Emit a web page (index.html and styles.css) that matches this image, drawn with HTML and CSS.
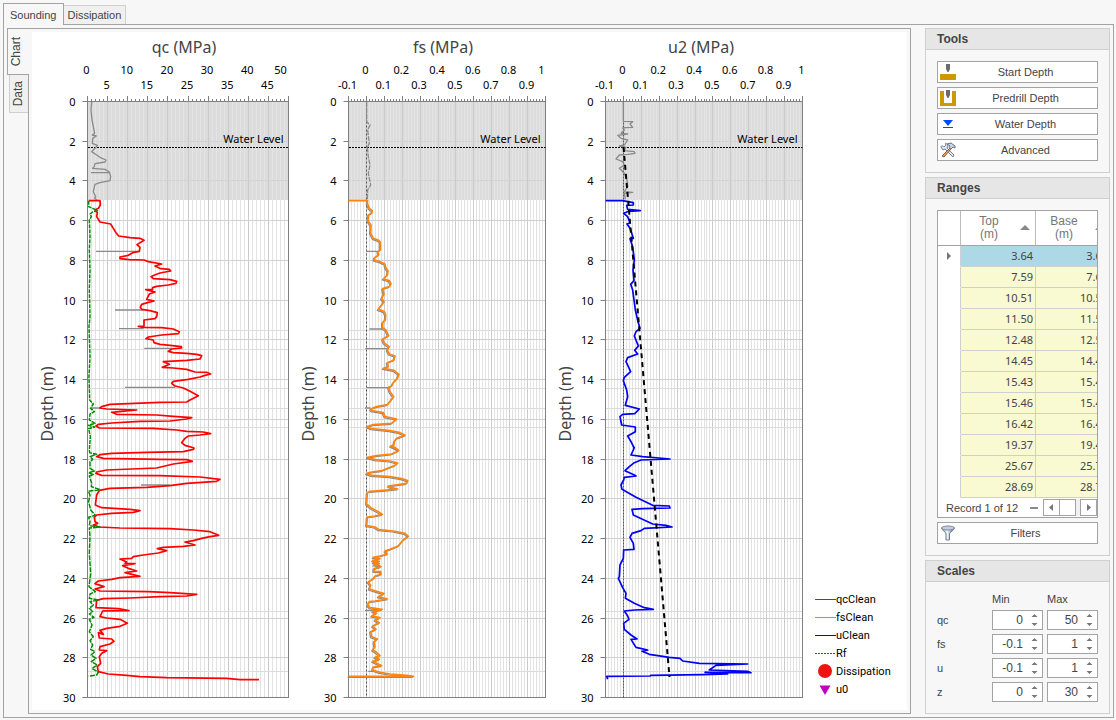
FILE: index.html
```html
<!DOCTYPE html>
<html lang="en">
<head>
<meta charset="utf-8">
<title>Sounding</title>
<link rel="stylesheet" href="styles.css">
</head>
<body>
<div class="tabs" role="tablist">
  <button class="tab tab-on" role="tab" aria-selected="true">Sounding</button>
  <button class="tab" role="tab" aria-selected="false">Dissipation</button>
</div>
<main class="page">
  <section class="view">
    <div class="side-tabs" role="tablist" aria-orientation="vertical">
      <button class="side-tab side-tab-on" role="tab" aria-selected="true"><span>Chart</span></button>
      <button class="side-tab" role="tab" aria-selected="false"><span>Data</span></button>
    </div>
    <div class="chart-frame">
      <div class="charts">
        <svg class="chart" id="qc" viewBox="32 32 268 678" role="img" aria-label="qc chart"></svg>
        <svg class="chart" id="fs" viewBox="300 32 256 678" role="img" aria-label="fs chart"></svg>
        <svg class="chart" id="u2" viewBox="556 32 259 678" role="img" aria-label="u2 chart"></svg>
        <ul class="legend">
          <li><svg width="21" height="16"><path d="M0 7.500H21" stroke="#ff0000"/></svg>qcClean</li>
          <li><svg width="21" height="16"><path d="M0 7.500H21" stroke="#ff8000"/></svg>fsClean</li>
          <li><svg width="21" height="16"><path d="M0 7.500H21" stroke="#0000ff"/></svg>uClean</li>
          <li><svg width="21" height="16"><path d="M0 7.500H21" stroke="#008000" stroke-dasharray="2 1"/></svg>Rf</li>
          <li><svg width="21" height="16"><circle cx="10" cy="7" r="7" fill="#f01410"/></svg>Dissipation</li>
          <li><svg width="21" height="16"><path d="M4.500 3.500H15.500L10 13Z" fill="#c000c0"/></svg>u0</li>
        </ul>
      </div>
    </div>
  </section>

  <aside class="sidebar">
    <section class="group">
      <h2>Tools</h2>
      <div class="group-body stack">
        <button class="btn"><svg viewBox="0 0 16 16"><path d="M6 0H10V5L8.500 8H7.500L6 5Z" fill="#6b6b6b"/><path d="M0 10H16V16H0Z" fill="#cc9900"/></svg><span>Start Depth</span></button>
        <button class="btn"><svg viewBox="0 0 16 16"><path d="M0 1H4V13H12V1H16V16H0Z" fill="#cc9900"/><path d="M6 0H10V5L8.500 8H7.500L6 5Z" fill="#6b6b6b"/></svg><span>Predrill Depth</span></button>
        <button class="btn"><svg viewBox="0 0 16 16"><path d="M3 4H13L8 10ZM3 11H13V12H3Z" fill="#0048ff"/></svg><span>Water Depth</span></button>
        <button class="btn"><svg viewBox="0 0 16 16" fill="none"><path d="M1 5C1 3 3 4 4 5L6 3C4 1 6 1 7 2L8 4L7 6L14 13L13 15L5 7L3 8Z" fill="#dfe5ee" stroke="#76839b"/><path d="M2 14L10 6L11 7L4 15Z" fill="#f2a45d" stroke="#8a5a3c"/><path d="M7 2L11 1L15 4V6L13 5L11 7L9 6L10 4Z" fill="#cdd5e2" stroke="#65728a"/></svg><span>Advanced</span></button>
      </div>
    </section>

    <section class="group">
      <h2>Ranges</h2>
      <div class="group-body stack">
        <div class="grid-box">
          <div class="grid-clip">
            <table class="grid">
              <colgroup><col class="c-mark"><col class="c-num"><col class="c-num"></colgroup>
              <thead>
                <tr><th aria-label="Row"></th><th scope="col"><span>Top<br>(m)</span><i></i></th><th scope="col"><span>Base<br>(m)</span><i></i></th></tr>
              </thead>
              <tbody>
                <tr class="sel"><td><b></b></td><td>3.64</td><td>3.66</td></tr>
                <tr><td></td><td>7.59</td><td>7.60</td></tr>
                <tr><td></td><td>10.51</td><td>10.54</td></tr>
                <tr><td></td><td>11.50</td><td>11.53</td></tr>
                <tr><td></td><td>12.48</td><td>12.51</td></tr>
                <tr><td></td><td>14.45</td><td>14.46</td></tr>
                <tr><td></td><td>15.43</td><td>15.45</td></tr>
                <tr><td></td><td>15.46</td><td>15.48</td></tr>
                <tr><td></td><td>16.42</td><td>16.44</td></tr>
                <tr><td></td><td>19.37</td><td>19.40</td></tr>
                <tr><td></td><td>25.67</td><td>25.70</td></tr>
                <tr><td></td><td>28.69</td><td>28.70</td></tr>
              </tbody>
            </table>
          </div>
          <div class="record">
            <span>Record 1 of 12</span><em></em>
            <div class="scroll">
              <button aria-label="Scroll left"><svg width="14" height="13"><path d="M9 3V10L5 6.500Z" fill="#777"/></svg></button>
              <div class="thumb"></div>
              <button class="end" aria-label="Scroll right"><svg width="14" height="13"><path d="M6 3V10L10 6.500Z" fill="#777"/></svg></button>
            </div>
          </div>
        </div>
        <button class="btn"><svg viewBox="0 0 16 16"><defs><linearGradient id="metal"><stop offset="0" stop-color="#8793a8"/><stop offset=".45" stop-color="#f2f5f9"/><stop offset="1" stop-color="#4d5a72"/></linearGradient></defs><path d="M1.500 3C1.500 5 6 7 6 9V15H9.500V9C9.500 7 14.500 5 14.500 3Z" fill="url(#metal)" stroke="#6d7a92"/><ellipse cx="8" cy="3" rx="6.500" ry="2" fill="#c3cddd" stroke="#7d8aa3"/></svg><span>Filters</span></button>
      </div>
    </section>

    <section class="group">
      <h2>Scales</h2>
      <div class="group-body scales">
        <span></span><span class="head">Min</span><span class="head">Max</span>
        <label for="qc-min">qc</label>
        <div class="spin"><input id="qc-min" value="0"><svg class="arrows" viewBox="0 0 7 14"><path d="M.5 4H6.500L3.500 1ZM.5 10H6.500L3.500 13Z"/></svg></div>
        <div class="spin"><input aria-label="qc max" value="50"><svg class="arrows" viewBox="0 0 7 14"><path d="M.5 4H6.500L3.500 1ZM.5 10H6.500L3.500 13Z"/></svg></div>
        <label for="fs-min">fs</label>
        <div class="spin"><input id="fs-min" value="-0.1"><svg class="arrows" viewBox="0 0 7 14"><path d="M.5 4H6.500L3.500 1ZM.5 10H6.500L3.500 13Z"/></svg></div>
        <div class="spin"><input aria-label="fs max" value="1"><svg class="arrows" viewBox="0 0 7 14"><path d="M.5 4H6.500L3.500 1ZM.5 10H6.500L3.500 13Z"/></svg></div>
        <label for="u-min">u</label>
        <div class="spin"><input id="u-min" value="-0.1"><svg class="arrows" viewBox="0 0 7 14"><path d="M.5 4H6.500L3.500 1ZM.5 10H6.500L3.500 13Z"/></svg></div>
        <div class="spin"><input aria-label="u max" value="1"><svg class="arrows" viewBox="0 0 7 14"><path d="M.5 4H6.500L3.500 1ZM.5 10H6.500L3.500 13Z"/></svg></div>
        <label for="z-min">z</label>
        <div class="spin"><input id="z-min" value="0"><svg class="arrows" viewBox="0 0 7 14"><path d="M.5 4H6.500L3.500 1ZM.5 10H6.500L3.500 13Z"/></svg></div>
        <div class="spin"><input aria-label="z max" value="30"><svg class="arrows" viewBox="0 0 7 14"><path d="M.5 4H6.500L3.500 1ZM.5 10H6.500L3.500 13Z"/></svg></div>
      </div>
    </section>
  </aside>
</main>
<script src="charts.js"></script>
</body>
</html>
```
FILE: styles.css
```css
* { box-sizing: border-box; }
body {
  margin: 0;
  padding: 3px 2px 2px 3px;
  background: #f7f7f7;
  color: #444;
  font: 11px/14px "Liberation Sans", Arial, sans-serif;
}
button, input { font: inherit; color: inherit; }

/* Top tabs */
.tabs { display: flex; align-items: flex-end; height: 21px; }
.tab {
  height: 19px;
  padding: 0 4px;
  background: #f0f0f0;
  border: 1px solid #cfcfcf;
  border-bottom: 0;
  border-left: 0;
}
.tab-on {
  position: relative;
  height: 22px;
  margin-bottom: -1px;
  padding: 0 6px;
  background: #f7f7f7;
  border: 1px solid #a3a3a3;
  border-bottom: 0;
}
.page {
  display: flex;
  gap: 14px;
  padding: 3px;
  border: 1px solid #a3a3a3;
}

/* Chart view with its vertical tabs */
.view { display: flex; flex: 1; min-width: 0; }
.side-tabs { display: flex; flex-direction: column; align-items: flex-end; width: 21px; }
.side-tab {
  display: flex;
  align-items: center;
  justify-content: center;
  width: 19px;
  height: 38px;
  padding: 0 2px 0 0;
  background: #f0f0f0;
  border: 1px solid #cfcfcf;
  border-top: 0;
  border-right: 0;
}
.side-tab span { writing-mode: vertical-rl; transform: rotate(180deg); font-size: 12px; }
.side-tab-on {
  position: relative;
  width: 22px;
  height: 47px;
  margin-right: -1px;
  padding: 0 6px 0 0;
  background: #f7f7f7;
  border: 1px solid #a3a3a3;
  border-right: 0;
}
.chart-frame { flex: 1; min-width: 0; padding: 3px; border: 1px solid #a3a3a3; }
.charts {
  display: grid;
  grid-template-columns: 268fr 256fr 259fr 92fr;
  background: #fff;
}
.chart { display: block; width: 100%; overflow: visible; font-family: "Noto Sans", "DejaVu Sans", sans-serif; }
.chart .title { font-size: 16px; fill: #444; text-anchor: middle; }
.chart .mark { font-size: 11px; fill: #000; text-anchor: middle; }
.chart .mark-end { text-anchor: end; }
.chart path, .chart line { fill: none; }
.chart .line { vector-effect: non-scaling-stroke; stroke-linejoin: round; }
.legend {
  align-self: end;
  margin: 0;
  padding: 0 0 11px;
  list-style: none;
  color: #000;
  font-family: Roboto, "Liberation Sans", sans-serif;
}
.legend li { display: flex; align-items: center; height: 18px; }
.legend svg { flex: none; fill: none; }

/* Sidebar */
.sidebar { display: flex; flex-direction: column; gap: 4px; width: 185px; }
.group { border: 1px solid #cfcfcf; }
.group:last-child { flex: 1; }
.group h2 {
  margin: 0;
  padding: 0 11px;
  background: #e6e6e6;
  border-bottom: 1px solid #cfcfcf;
  font-size: 12px;
  line-height: 20px;
}
.group-body { padding: 11px; }
.stack { display: flex; flex-direction: column; gap: 4px; }
.btn {
  display: flex;
  align-items: center;
  height: 22px;
  padding: 0 2px;
  background: #fff;
  border: 1px solid #a3a3a3;
}
.btn svg { width: 16px; height: 16px; flex: none; }
.btn span { flex: 1; }

.grid-box { background: #fff; border: 1px solid #a3a3a3; }
.grid-clip { overflow: hidden; }
.grid { width: 173px; table-layout: fixed; border-collapse: separate; border-spacing: 0; }
.c-mark { width: 23px; }
.c-num { width: 75px; }
.grid th {
  position: relative;
  height: 35px;
  padding: 0;
  border-right: 1px solid #bcbcbc;
  border-bottom: 1px solid #a3a3a3;
  color: #757575;
  font-size: 12px;
  font-weight: normal;
  line-height: 13px;
}
.grid th span { display: block; padding-right: 18px; }
.grid th i {
  position: absolute;
  right: 5px;
  top: 14px;
  border: 5px solid transparent;
  border-top: 0;
  border-bottom: 5px solid #888;
}
.grid td {
  height: 21px;
  padding: 0 2px 0 0;
  background: #f9f9d2;
  border-right: 1px solid #cfcfcf;
  border-bottom: 1px solid #cfcfcf;
  font: 11px/20px "Noto Sans", "DejaVu Sans", sans-serif;
  text-align: right;
}
.grid td:first-child { background: #fff; border-bottom-color: #fff; }
.grid .sel td { background: #add8e6; }
.grid .sel td:first-child { background: #fff; }
.grid b {
  display: block;
  width: 4px;
  margin-left: 9px;
  border: 4px solid transparent;
  border-right: 0;
  border-left: 4px solid #777;
}
.record { display: flex; align-items: center; height: 19px; padding: 0 0 0 8px; white-space: nowrap; }
.record em { width: 8px; height: 2px; margin: 0 5px 0 12px; background: #888; }
.scroll { display: flex; flex: 1; height: 17px; background: #f0f0f0; }
.scroll button, .thumb {
  width: 17px;
  padding: 1px 0;
  background: #fff;
  border: 1px solid #a3a3a3;
}
.scroll svg { display: block; }
.thumb { margin-left: -1px; }
.scroll .end { margin-left: auto; }

.scales {
  display: grid;
  grid-template-columns: 1fr 51px 51px;
  gap: 4px;
  align-items: center;
}
.scales .head { line-height: 13px; }
.spin {
  display: flex;
  align-items: center;
  height: 20px;
  padding-right: 4px;
  background: #fff;
  border: 1px solid #a3a3a3;
}
.spin input {
  flex: 1;
  min-width: 0;
  padding: 0 8px 0 0;
  background: none;
  border: 0;
  outline: 0;
  font-size: 12px;
  text-align: right;
}
.arrows { width: 7px; height: 14px; flex: none; fill: #777; }
```
FILE: charts.js
```js
const NS = 'http://www.w3.org/2000/svg';
const TOP = 101.5;
const BOTTOM = 697.5;
const METRE = (BOTTOM - TOP) / 30;
const RANGE_LINES = [330, 349, 388, 408, 427, 611, 671];

function add(parent, tag, attrs, text) {
  const node = document.createElementNS(NS, tag);
  for (const key in attrs) node.setAttribute(key, attrs[key]);
  if (text !== undefined) node.textContent = text;
  parent.appendChild(node);
  return node;
}

function line(svg, x1, y1, x2, y2, stroke, extra) {
  add(svg, 'line', Object.assign({ x1, y1, x2, y2, stroke }, extra));
}

/* Samples are stored at three units per pixel from the origin of each block. */
function trace(svg, x, y, points, stroke, width, extra) {
  const group = add(svg, 'g', { transform: `translate(${x} ${y}) scale(.33333)` });
  add(group, 'path', Object.assign({ class: 'line', d: 'M' + points, stroke, 'stroke-width': width }, extra));
}

function frame(chart) {
  const { svg, left, right, majors, minors, step } = chart;
  const height = BOTTOM - TOP;
  const count = majors * minors;
  const shadeBottom = 200;
  add(svg, 'rect', { x: left, y: TOP, width: right - left, height: shadeBottom - TOP, fill: '#dcdcdc' });
  for (let i = 0; i <= count; i++) {
    const x = Math.round(left + (right - left) * i / count - 0.5) + 0.5;
    const major = i % minors === 0;
    line(svg, x, TOP, x, shadeBottom, major ? '#cbcbcb' : '#e4e4e4');
    line(svg, x, shadeBottom, x, BOTTOM, major ? '#cbcbcb' : '#e2e2e2');
    line(svg, x, major ? 96 : 99, x, TOP, '#7f7f7f');
  }
  for (let m = 0; m <= 30; m += 2) {
    const y = Math.round(TOP + m * METRE - 0.5) + 0.5;
    line(svg, left, y, right, y, '#d0d0d0', m < 5 ? { 'stroke-dasharray': '3 1' } : {});
    line(svg, left - 5, y, left, y, '#7f7f7f');
    add(svg, 'text', { class: 'mark mark-end', x: left - 12, y: y + 4.5 }, m);
  }
  RANGE_LINES.forEach(y => line(svg, left, y + 0.5, right, y + 0.5, '#dcdcdc'));
  add(svg, 'rect', { x: left, y: TOP, width: right - left, height, fill: 'none', stroke: '#7f7f7f' });
  line(svg, left + 0.5, 147.5, right, 147.5, '#000', { 'stroke-dasharray': '2 1' });
  add(svg, 'text', { class: 'mark mark-end', x: right - 5, y: 143 }, 'Water Level');
  add(svg, 'text', { class: 'title', x: chart.titleX, y: 53 }, chart.title);
  add(svg, 'text', { class: 'title', transform: `translate(${chart.depthX} 404) rotate(-90)` }, 'Depth (m)');
  chart.labels.forEach((label, i) => {
    const high = i % 2 === chart.highParity;
    const last = i === majors ? chart.lastShift : 0;
    add(svg, 'text', { class: 'mark', x: left - 1 + step * i - last, y: high ? 74 : 89 }, label);
  });
}

const tenths = ['-0.1', '0', '0.1', '0.2', '0.3', '0.4', '0.5', '0.6', '0.7', '0.8', '0.9', '1'];
const qc = document.getElementById('qc');
const fs = document.getElementById('fs');
const u2 = document.getElementById('u2');

frame({ svg: qc, left: 87.5, right: 288.5, majors: 10, minors: 5, step: 20.1, title: 'qc (MPa)', titleX: 184, depthX: 53, highParity: 0, lastShift: 7,
  labels: [0, 5, 10, 15, 20, 25, 30, 35, 40, 45, 50] });
frame({ svg: fs, left: 348.5, right: 545.5, majors: 11, minors: 6, step: 17.9, title: 'fs (MPa)', titleX: 443, depthX: 314, highParity: 1, lastShift: 3, labels: tenths });
frame({ svg: u2, left: 605.5, right: 802.5, majors: 11, minors: 6, step: 17.9, title: 'u2 (MPa)', titleX: 701, depthX: 571, highParity: 1, lastShift: 0, labels: tenths });

const GREY = '#8a8a8a';

/* Cone resistance */
trace(qc, 0, 0, '275,306 273,330 276,360 280,380 284,400 277,405 289,408 278,415 277,430 292,436 285,445 275,455 290,465 300,472 318,480 315,486 285,491 283,500 278,505 315,508 328,516 332,530 330,542 300,548 285,553 280,575 287,590 284,595 290,600M273,518H328', GREY, 1.3);
trace(qc, 40, 190, '168,184H295M225,360H310M237,416H310M313,475H395M255,592H405M155,654H185', GREY, 1.3);
trace(qc, 40, 440, '303,135H390M188,512H240', GREY, 1.3);
trace(qc, 40, 190, '146,32 180,32 181,45 175,55 165,60 172,68 170,80 180,96 212,102 220,115 228,128 236,138 270,143 300,145 312,151 300,158 291,164 300,172 298,184 278,188 265,196 240,201 240,206 268,209 312,210 325,215 365,222 345,228 362,236 388,238 392,243 360,249 342,256 333,260 340,266 390,269 410,274 408,280 385,285 350,289 338,293 337,299 317,299 345,306 328,312 320,328 342,333 325,337 305,343 301,352 305,358 330,362 352,368 350,380 345,386 312,390 312,408 295,409 310,412 365,413 400,417 418,425 415,431 365,435 325,441 318,446 340,450 342,458 360,463 390,466 424,470 425,474 395,477 385,484 400,488 440,490 470,493 485,497 480,507 440,511 370,515 388,523 367,532 400,534 440,538 465,546 500,547 512,552 495,556 480,561 445,568 400,574 395,580 405,588 430,594 450,604 475,617 450,630 440,636 360,637 210,643 185,650 180,654 200,657 290,660 215,667 230,673 350,675 400,679 455,683 440,687 390,693 300,694 215,699 175,703 168,708 178,714 340,715 410,720 440,724 490,726 512,731 480,735 445,738 435,745 425,758 435,766 463,774', '#ff0000', 1.7);
trace(qc, 40, 440, '463,24 460,28 430,35 320,37 215,40 180,44 170,50 190,55 360,58 440,59 457,64 400,72 350,84 200,90 170,96 168,100 185,106 360,107 480,111 540,118 530,124 440,130 390,137 320,142 210,145 178,151 170,165 166,195 185,203 270,208 300,212 280,217 215,220 170,225 163,232 165,245 173,250 160,255 178,261 240,264 390,266 460,270 510,275 525,281 536,286 510,290 485,295 460,302 435,306 465,315 430,319 370,322 352,326 380,332 355,339 310,345 280,350 275,355 240,357 260,366 255,370 285,371 248,377 265,385 290,393 255,398 300,409 240,413 215,418 175,423 165,431 192,440 165,447 180,453 325,455 390,458 470,463 440,468 360,470 270,474 190,476 170,481 168,503 235,506 267,512 188,513 180,530 200,534 240,538 262,550 240,559 200,565 180,571 190,583 175,578 178,594 215,597 222,604 210,612 180,620 178,630 200,632 185,640 178,650 182,670 172,680 175,695 205,702 260,706 300,710 380,713 560,715 600,719 657,719', '#ff0000', 1.7);
trace(qc, 40, 190, '146,32 146,50 160,56 172,62 158,66 150,72 154,80 148,90 150,140 148,180 150,240 148,300 150,380 147,410 150,500 147,560 149,630 160,642 152,655 163,665 150,672 148,690 165,700 145,706 164,711 146,716 151,740 148,780', '#008a00', 1.5, { 'stroke-dasharray': '4 1' });
trace(qc, 40, 440, '148,30 149,38 170,43 150,50 158,58 150,65 150,85 163,93 146,98 160,104 148,108 155,130 154,140 180,149 145,154 150,165 146,185 152,210 166,226 146,232 150,245 148,257 180,261 148,264 150,290 148,340 152,400 147,440 166,455 150,462 148,475 176,480 150,485 160,495 148,505 158,515 148,522 162,532 148,538 156,555 148,575 160,590 150,602 158,615 152,628 165,635 153,645 168,655 154,665 172,675 156,685 175,697 170,705 146,709', '#008a00', 1.5, { 'stroke-dasharray': '5 1' });

/* Sleeve friction */
const fsUpper = '146,32 203,32 202,40 208,55 217,62 215,70 205,75 204,92 213,106 212,130 220,145 236,151 241,156 241,180 234,185 236,195 224,203 222,210 240,215 255,222 257,232 264,243 262,255 255,262 250,267 268,272 273,282 268,290 248,296 252,312 245,325 252,335 245,345 235,358 253,365 257,375 256,390 248,397 248,414 258,420 266,437 248,447 252,458 268,470 262,480 268,492 285,498 282,510 262,518 265,530 250,535 282,541 297,553 292,565 280,578 275,588 266,592 270,605 281,620 270,635 262,644 230,650 212,657 215,662 250,668 255,680 290,687 275,700 220,704 202,710 215,716 270,722 300,728 315,736 290,745 283,755 282,765 272,768 296,780';
const fsLower = '272,18 285,22 296,32 275,42 230,47 203,52 225,59 270,63 293,69 285,76 265,84 245,92 215,96 200,100 215,106 270,110 305,116 323,122 320,130 295,134 265,138 275,143 293,147 250,151 210,154 202,158 200,192 215,205 235,215 247,223 225,228 202,231 200,257 225,261 237,269 280,273 315,280 325,289 310,300 295,318 270,328 255,333 262,342 240,348 220,352 240,356 218,362 238,364 220,368 238,371 222,375 236,376 243,380 222,386 222,394 242,395 243,403 225,408 222,415 205,426 212,436 208,447 230,454 252,461 235,470 262,477 225,483 208,485 203,495 210,503 246,508 218,514 230,520 215,528 240,533 225,540 238,548 218,558 228,568 212,575 215,590 232,597 222,606 225,620 218,630 228,636 240,647 225,652 238,658 218,664 245,677 220,681 218,690 240,697 270,702 320,706 340,709 146,709';
line(fs, 366.5, TOP, 366.5, BOTTOM, '#555', { 'stroke-dasharray': '2 2' });
trace(fs, 300, 30, '200,216 200,275 210,285 203,300 208,340 202,352 205,380 210,405 205,430 212,465 203,480 202,508', GREY, 1.3, { 'stroke-dasharray': '5 1' });
trace(fs, 300, 190, '198,184H234M208,417H248M196,476H262M200,593H266M195,654H212', GREY, 1.3);
trace(fs, 300, 440, '195,511H245M205,694H220', GREY, 1.3);
trace(fs, 299, 191, fsUpper.slice(fsUpper.indexOf('203,32')), GREY, 1.2);
trace(fs, 299, 441, fsLower, GREY, 1.2);
trace(fs, 300, 190, fsUpper, '#ff8510', 1.7);
trace(fs, 300, 440, fsLower, '#ff8510', 1.7);

/* Pore pressure */
line(u2, 623.5, TOP, 623.5, BOTTOM, '#555', { 'stroke-dasharray': '2 1' });
trace(u2, 556, 30, '202,216 202,274 230,275 222,282 230,292 210,293 200,294 205,300 195,310 215,312 185,316 195,325 215,330 205,345 190,348 210,352 205,362 235,365 237,370 215,373 190,375 180,387 200,395 205,405 190,415 205,430 213,450 215,470 205,485 230,487 205,490 208,508', GREY, 1.3);
trace(u2, 556, 190, '149,32 200,32 232,38 232,45 212,46 215,58 253,62 218,64 203,70 215,80 222,98 213,102 222,115 232,145 222,146 230,170 235,210 231,240 234,272 224,283 230,300 238,360 246,395 252,415 240,425 235,438 247,468 236,481 245,492 215,503 210,515 224,545 205,562 202,572 212,600 215,620 208,646 250,657 236,671 200,673 192,680 197,705 238,711 238,725 215,738 225,755 235,775', '#0000f5', 1.7);
trace(u2, 556, 440, '235,20 232,30 225,45 260,50 342,57 255,60 235,68 220,80 207,92 235,105 240,108 205,112 203,120 195,135 198,148 240,172 290,196 340,198 342,204 260,206 228,208 232,225 290,252 330,256 348,261 265,265 255,272 228,280 222,292 232,310 234,328 203,330 202,355 192,375 190,410 187,415 200,443 210,460 208,475 235,490 265,503 292,508 235,510 205,513 215,528 219,538 203,550 205,568 225,585 243,597 225,598 240,622 275,630 258,634 280,643 340,652 372,655 380,663 430,670 575,672 480,676 460,690 575,694 585,698 447,697 515,702 440,704 285,706 282,708 152,709 155,718', '#0000f5', 1.7);
line(u2, 623.5, 147, 669.5, 677, '#000', { 'stroke-width': 2, 'stroke-dasharray': '5 4' });
```
